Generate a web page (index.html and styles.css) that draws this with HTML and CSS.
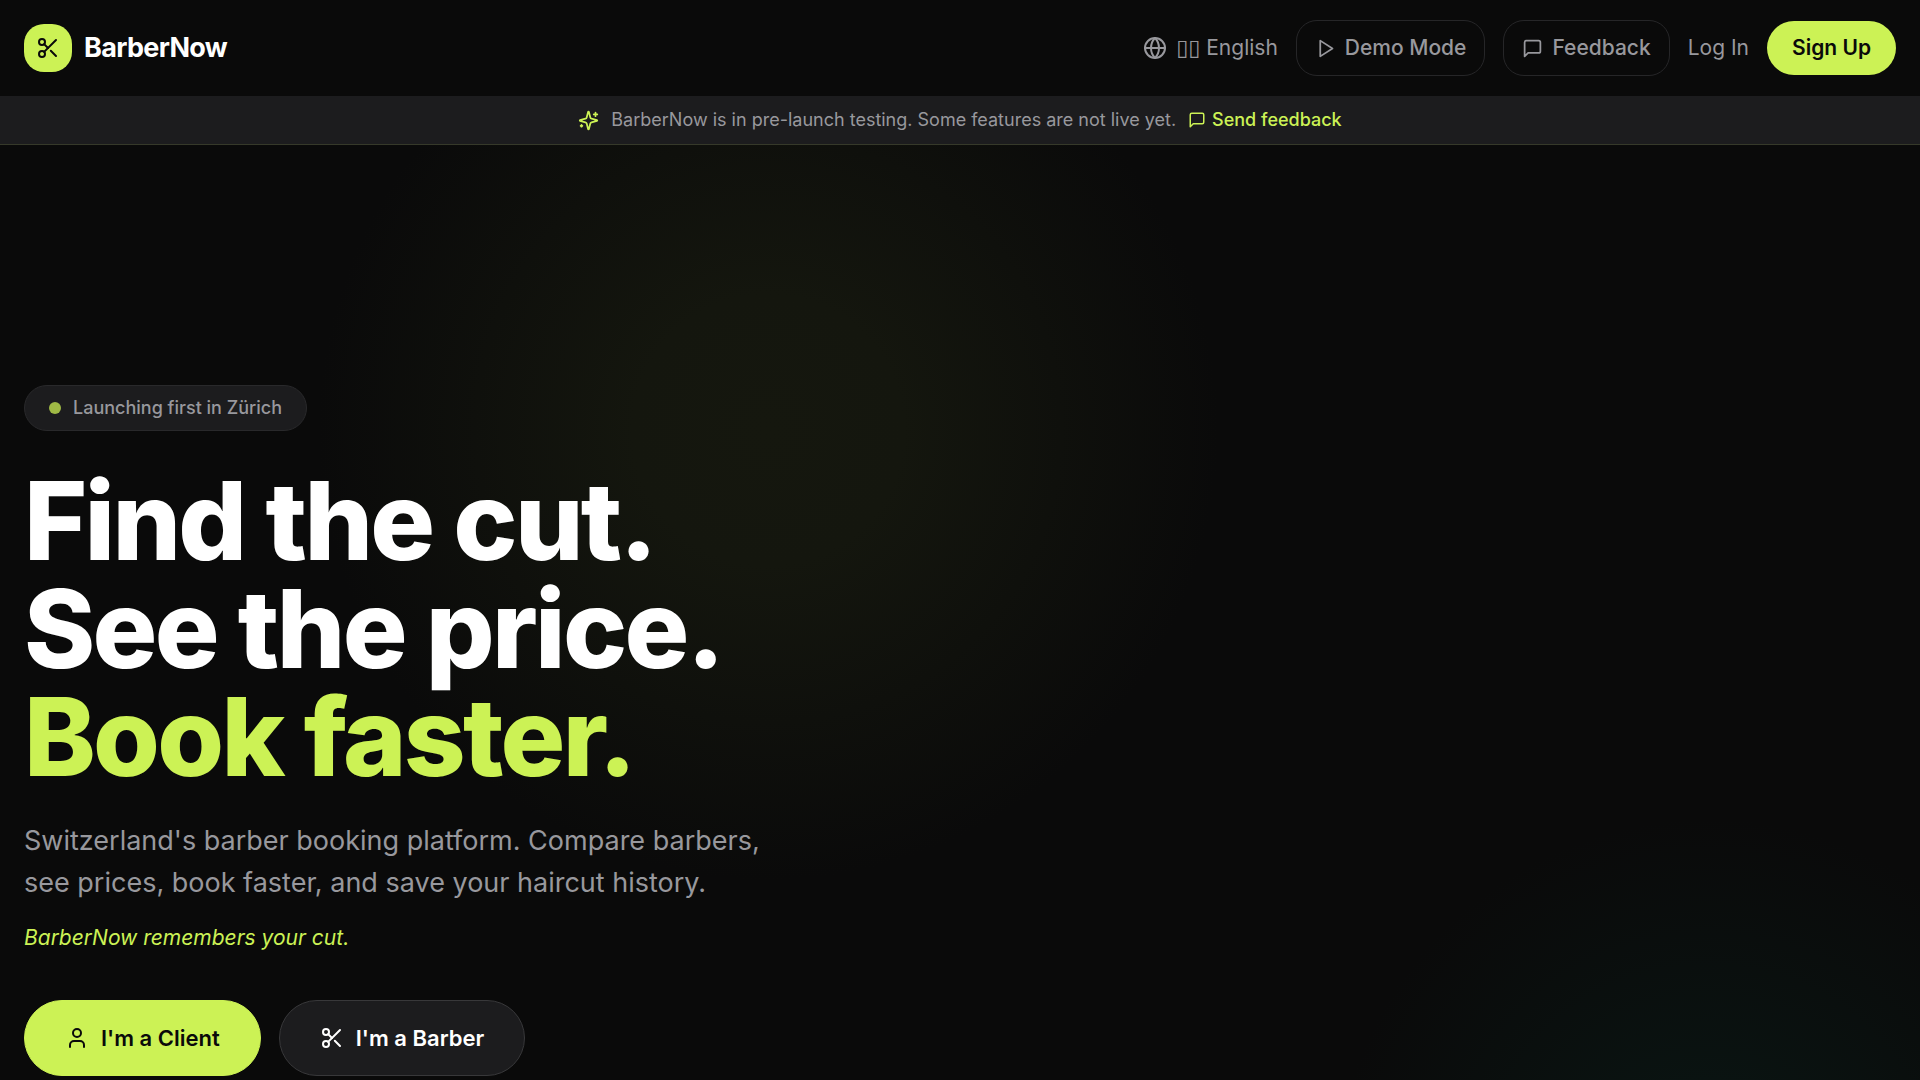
FILE: index.html
```html
<!DOCTYPE html>
<html lang="en">
<head>
  <meta charset="UTF-8">
  <meta name="viewport" content="width=device-width, initial-scale=1">
  <title>BarberNow</title>
  <link rel="stylesheet" href="styles.css">
</head>
<body>
  <header class="navbar">
    <a class="brand" href="#">
      <span class="brand-mark">
        <svg class="icon icon-lg" viewBox="0 0 24 24"><circle cx="6" cy="6" r="3"/><path d="M8.12 8.12 12 12"/><path d="M20 4 8.12 15.88"/><circle cx="6" cy="18" r="3"/><path d="M14.8 14.8 20 20"/></svg>
      </span>
      BarberNow
    </a>
    <nav class="nav-links">
      <button class="nav-lang" type="button" aria-haspopup="true">
        <svg class="icon icon-lg" viewBox="0 0 24 24"><circle cx="12" cy="12" r="10"/><path d="M12 2a14.5 14.5 0 0 0 0 20 14.5 14.5 0 0 0 0-20"/><path d="M2 12h20"/></svg>
        <span><span class="flag">▯▯</span> English</span>
      </button>
      <a class="nav-btn" href="#demo">
        <svg class="icon" viewBox="0 0 24 24"><path d="M6 3 20 12 6 21Z"/></svg>
        Demo Mode
      </a>
      <button class="nav-btn" type="button">
        <svg class="icon" viewBox="0 0 24 24"><path d="M21 15a2 2 0 0 1-2 2H7l-4 4V5a2 2 0 0 1 2-2h14a2 2 0 0 1 2 2z"/></svg>
        Feedback
      </button>
      <a class="nav-login" href="#login">Log In</a>
      <a class="nav-signup" href="#signup">Sign Up</a>
    </nav>
  </header>

  <div class="banner">
    <svg class="icon accent" viewBox="0 0 24 24"><path d="M9.937 15.5A2 2 0 0 0 8.5 14.063l-6.135-1.582a.5.5 0 0 1 0-.962L8.5 9.936A2 2 0 0 0 9.937 8.5l1.582-6.135a.5.5 0 0 1 .963 0L14.063 8.5A2 2 0 0 0 15.5 9.937l6.135 1.581a.5.5 0 0 1 0 .964L15.5 14.063a2 2 0 0 0-1.437 1.437l-1.582 6.135a.5.5 0 0 1-.963 0z"/><path d="M20 3v4"/><path d="M22 5h-4"/><path d="M4 17v2"/><path d="M5 18H3"/></svg>
    <span>BarberNow is in pre-launch testing. Some features are not live yet.</span>
    <button class="banner-link" type="button">
      <svg class="icon icon-sm" viewBox="0 0 24 24"><path d="M21 15a2 2 0 0 1-2 2H7l-4 4V5a2 2 0 0 1 2-2h14a2 2 0 0 1 2 2z"/></svg>
      Send feedback
    </button>
  </div>

  <main class="hero">
    <p class="pill"><span class="dot"></span>Launching first in Zürich</p>
    <h1>Find the cut.<br>See the price.<br><span class="accent">Book faster.</span></h1>
    <p class="lead">Switzerland's barber booking platform. Compare barbers, see prices, book faster, and save your haircut history.</p>
    <p class="tagline">BarberNow remembers your cut.</p>
    <div class="actions">
      <a class="cta cta-primary" href="#client">
        <svg class="icon icon-lg" viewBox="0 0 24 24"><path d="M19 21v-2a4 4 0 0 0-4-4H9a4 4 0 0 0-4 4v2"/><circle cx="12" cy="7" r="4"/></svg>
        I'm a Client
      </a>
      <a class="cta cta-dark" href="#barber">
        <svg class="icon icon-lg" viewBox="0 0 24 24"><circle cx="6" cy="6" r="3"/><path d="M8.12 8.12 12 12"/><path d="M20 4 8.12 15.88"/><circle cx="6" cy="18" r="3"/><path d="M14.8 14.8 20 20"/></svg>
        I'm a Barber
      </a>
    </div>
  </main>
</body>
</html>
```
FILE: styles.css
```css
:root {
  --bg: #0a0a0a;
  --surface: #1c1c1e;
  --accent: #ccf255;
  --muted: #98989d;
  --line: #262628;
}

* {
  box-sizing: border-box;
}

body {
  margin: 0;
  background: var(--bg);
  color: #fff;
  font-family: Inter, sans-serif;
  font-size: 21px;
  line-height: 32px;
}

h1, p {
  margin: 0;
}

a {
  color: inherit;
  text-decoration: none;
}

button {
  background: none;
  border: none;
  padding: 0;
  color: inherit;
  font: inherit;
  cursor: pointer;
}

.icon {
  width: 21px;
  height: 21px;
  flex-shrink: 0;
  fill: none;
  stroke: currentColor;
  stroke-width: 2;
  stroke-linecap: round;
  stroke-linejoin: round;
}

.icon-lg {
  width: 24px;
  height: 24px;
}

.icon-sm {
  width: 18px;
  height: 18px;
}

.accent {
  color: var(--accent);
}

/* navbar */
.navbar {
  display: flex;
  align-items: center;
  justify-content: space-between;
  height: 96px;
  padding: 0 24px;
}

.brand {
  display: flex;
  align-items: center;
  gap: 12px;
  font-size: 27px;
  font-weight: 700;
  letter-spacing: -0.025em;
}

.brand-mark {
  display: grid;
  place-items: center;
  width: 48px;
  height: 48px;
  border-radius: 20px;
  background: var(--accent);
  color: var(--bg);
}

.nav-links {
  display: flex;
  align-items: center;
  gap: 18px;
  color: var(--muted);
}

.nav-lang {
  display: flex;
  align-items: center;
  gap: 9px;
}

.flag {
  font-family: "DejaVu Sans", sans-serif;
  font-size: 22px;
}

.nav-btn {
  display: flex;
  align-items: center;
  gap: 9px;
  padding: 11px 18px;
  border: 1px solid var(--line);
  border-radius: 21px;
  font-weight: 500;
}

.nav-signup {
  padding: 11px 25px;
  border-radius: 27px;
  background: var(--accent);
  color: var(--bg);
  font-weight: 600;
}

/* pre-launch notice */
.banner {
  display: flex;
  align-items: center;
  justify-content: center;
  gap: 12px;
  padding: 10px 24px;
  background: var(--surface);
  border-bottom: 1px solid #36392a;
  color: var(--muted);
  font-size: 18px;
  line-height: 28px;
}

.banner-link {
  display: flex;
  align-items: center;
  gap: 6px;
  color: var(--accent);
  font-weight: 500;
}

/* hero */
.hero {
  min-height: calc(100vh - 145px);
  padding: 240px 24px 0;
  background:
    radial-gradient(circle 450px at 40% 285px, #15170e 0%, #14160e 30%, transparent 100%),
    radial-gradient(circle 375px at 89% 1049px, #0b1815 0%, #0a1311 30%, transparent 100%);
}

.pill {
  display: inline-flex;
  align-items: center;
  gap: 12px;
  padding: 8px 24px;
  border: 1px solid #29292b;
  border-radius: 23px;
  background: var(--surface);
  color: var(--muted);
  font-size: 18px;
  font-weight: 500;
  line-height: 28px;
  vertical-align: top;
}

.dot {
  width: 12px;
  height: 12px;
  border-radius: 50%;
  background: #9fb945;
}

h1 {
  margin-top: 36px;
  font-size: 108px;
  font-weight: 800;
  line-height: 108px;
  letter-spacing: -0.025em;
}

.lead {
  max-width: 768px;
  margin-top: 29px;
  color: var(--muted);
  font-size: 27px;
  line-height: 42px;
}

.tagline {
  margin-top: 18px;
  color: var(--accent);
  font-style: italic;
}

.actions {
  display: flex;
  gap: 18px;
  margin-top: 46px;
}

.cta {
  display: flex;
  align-items: center;
  gap: 12px;
  padding: 21px 40px;
  border: 1px solid transparent;
  border-radius: 38px;
  font-size: 22px;
  font-weight: 600;
}

.cta-primary {
  border-color: var(--accent);
  background: var(--accent);
  color: var(--bg);
}

.cta-dark {
  border-color: #38383a;
  background: var(--surface);
}
```
